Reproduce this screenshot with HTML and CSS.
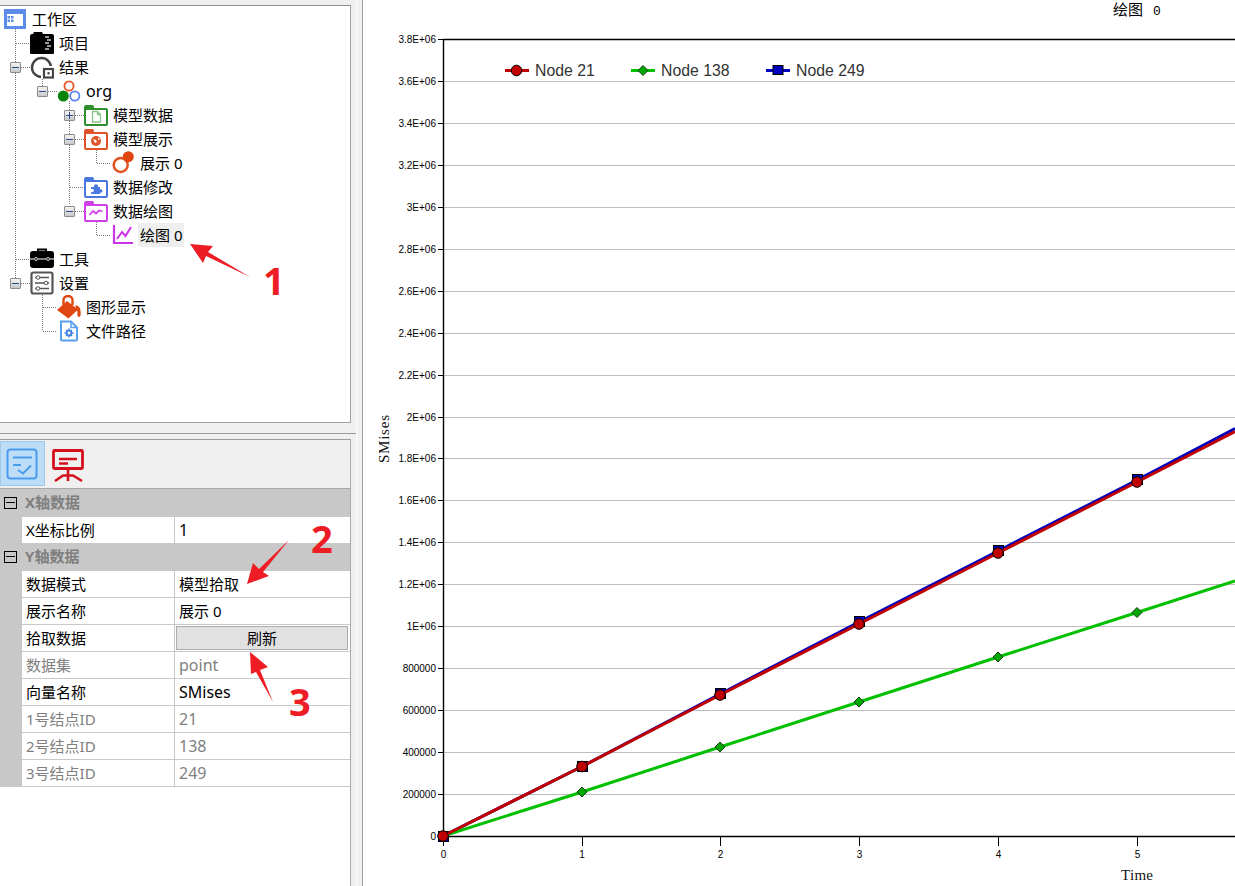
FILE: index.html
```html
<!DOCTYPE html>
<html lang="zh">
<head>
<meta charset="utf-8">
<title>绘图 0</title>
<link rel="stylesheet" href="styles.css">
</head>
<body>
<div class="shell">
  <aside class="left">
    <div class="strip"></div>
    <section class="tree">
      <svg class="connectors" viewBox="0 6 350 416" width="350" height="416">
        <path d="M15.5 29V278M16 43.5H30M16 259.5H30M21 67.5H30M21 283.5H30M42.5 77V86M48 91.5H57M42.5 295V331M43 307.5H57M43 331.5H57M69.5 101V205M75 115.5H84M75 139.5H84M70 187.5H84M75 211.5H84M96.5 150V163M97 163.5H111M96.5 222V235M97 235.5H111"/>
      </svg>
      <div class="node l0">
        <svg class="ico" viewBox="0 0 24 24"><rect x="2.500" y="3.500" width="19" height="17" fill="#fff" stroke="#5f8beb" stroke-width="3"/><rect x="1" y="2" width="22" height="5" fill="#5f8beb"/><path d="M4.500 9h2.500v2.500H4.500zM8 9h2.500v2.500H8zM4.500 12.500h2.500V15H4.500zM8 12.500h2.500V15H8z" fill="#5f8beb"/></svg>
        <span class="label">工作区</span>
      </div>
      <div class="node l1"><span class="slot"></span>
        <svg class="ico" viewBox="0 0 24 24"><path d="M0 5a2 2 0 0 1 2-2h1l1-2h8l1 2h9a2 2 0 0 1 2 2v17a1 1 0 0 1-1 1H1a1 1 0 0 1-1-1z" fill="#000"/><path d="M15 6h4M17 9h4M15 12h4M17 15h4M15 18h4" stroke="#ccc" stroke-width="1.600"/></svg>
        <span class="label">项目</span>
      </div>
      <div class="node l1"><span class="slot"><span class="exp minus"></span></span>
        <svg class="ico" viewBox="0 0 24 24"><circle cx="11.500" cy="12.500" r="9.500" fill="none" stroke="#444" stroke-width="2.400"/><rect x="11" y="11" width="13" height="13" fill="#fff"/><rect x="14" y="14" width="9" height="8.500" fill="#fff" stroke="#444" stroke-width="2.200"/><rect x="17.500" y="17" width="2" height="2.500" fill="#444"/></svg>
        <span class="label">结果</span>
      </div>
      <div class="node l2"><span class="slot"><span class="exp minus"></span></span>
        <svg class="ico" viewBox="0 0 24 24"><circle cx="12" cy="7" r="4.600" fill="#fff" stroke="#e8572a" stroke-width="1.800"/><circle cx="17.800" cy="17" r="4.600" fill="#fff" stroke="#5a85ee" stroke-width="1.800"/><circle cx="6.300" cy="17" r="5.500" fill="#0a840a"/></svg>
        <span class="label lat">org</span>
      </div>
      <div class="node l3"><span class="slot"><span class="exp plus"></span></span>
        <svg class="ico" viewBox="0 0 24 24"><path d="M0 6V4a2 2 0 0 1 2-2h6a2 2 0 0 1 2 2v1h12a2 2 0 0 1 2 2v14a2 2 0 0 1-2 2H2a2 2 0 0 1-2-2z" fill="#2d8f2d"/><rect x="2" y="7" width="20" height="14" fill="#fff"/><path d="M8.500 8.500h5l3 3v7.500h-8zM13.500 8.500v3h3" fill="none" stroke="#8bc48b" stroke-width="1.300"/></svg>
        <span class="label">模型数据</span>
      </div>
      <div class="node l3"><span class="slot"><span class="exp minus"></span></span>
        <svg class="ico" viewBox="0 0 24 24"><path d="M0 6V4a2 2 0 0 1 2-2h6a2 2 0 0 1 2 2v1h12a2 2 0 0 1 2 2v14a2 2 0 0 1-2 2H2a2 2 0 0 1-2-2z" fill="#e0522a"/><rect x="2" y="7" width="20" height="14" fill="#fff"/><circle cx="12" cy="14" r="5" fill="#e0522a"/><path d="M9 12l3 1 1 2-2 1zM14 10.500l2 2-2 .500z" fill="#fff"/></svg>
        <span class="label">模型展示</span>
      </div>
      <div class="node l4"><span class="slot"></span>
        <svg class="ico" viewBox="0 0 24 24"><circle cx="9.700" cy="14" r="7" fill="#fff" stroke="#e0521f" stroke-width="2.500"/><circle cx="17.300" cy="5.700" r="5.500" fill="#e0460f"/></svg>
        <span class="label">展示 0</span>
      </div>
      <div class="node l3"><span class="slot"></span>
        <svg class="ico" viewBox="0 0 24 24"><path d="M0 6V4a2 2 0 0 1 2-2h6a2 2 0 0 1 2 2v1h12a2 2 0 0 1 2 2v14a2 2 0 0 1-2 2H2a2 2 0 0 1-2-2z" fill="#4a76e0"/><rect x="2" y="7" width="20" height="14" fill="#fff"/><path d="M7 12h3.200a2 2 0 1 1 3.600 0H16v2.500a1.700 1.700 0 1 1 0 3V19H7v-2a1.800 1.800 0 1 0 0-3z" fill="#4a76e0"/></svg>
        <span class="label">数据修改</span>
      </div>
      <div class="node l3"><span class="slot"><span class="exp minus"></span></span>
        <svg class="ico" viewBox="0 0 24 24"><path d="M0 6V4a2 2 0 0 1 2-2h6a2 2 0 0 1 2 2v1h12a2 2 0 0 1 2 2v14a2 2 0 0 1-2 2H2a2 2 0 0 1-2-2z" fill="#d040e8"/><rect x="2" y="7" width="20" height="14" fill="#fff"/><path d="M5.500 16l3.500-4 3 2.500 3-3 3.500 1" fill="none" stroke="#d040e8" stroke-width="1.800"/></svg>
        <span class="label">数据绘图</span>
      </div>
      <div class="node l4"><span class="slot"></span>
        <svg class="ico" viewBox="0 0 24 24"><path d="M3 2v18h19" fill="none" stroke="#cc33e6" stroke-width="2.200"/><path d="M6 16l5-7 3.500 4L20 4" fill="none" stroke="#cc33e6" stroke-width="2"/></svg>
        <span class="label selected">绘图 0</span>
      </div>
      <div class="node l1"><span class="slot"></span>
        <svg class="ico" viewBox="0 0 24 24"><path d="M8 6V2.500h8V6" fill="none" stroke="#000" stroke-width="2"/><rect y="4" width="24" height="17" rx="3" fill="#000"/><path d="M0 12h24" stroke="#fff" stroke-width="1"/><path d="M5 10.500h2v3H5zM17 10.500h2v3h-2z" fill="#000" stroke="#fff" stroke-width=".6"/></svg>
        <span class="label">工具</span>
      </div>
      <div class="node l1"><span class="slot"><span class="exp minus"></span></span>
        <svg class="ico" viewBox="0 0 24 24"><rect x="1.500" y="1.500" width="21" height="21" rx="2" fill="#fff" stroke="#555" stroke-width="2.200"/><path d="M5 6.500h14M5 12h14M5 17.500h14" stroke="#555" stroke-width="1.300"/><circle cx="8" cy="6.500" r="1.800" fill="#fff" stroke="#555"/><circle cx="16" cy="12" r="1.800" fill="#fff" stroke="#555"/><circle cx="8" cy="17.500" r="1.800" fill="#fff" stroke="#555"/></svg>
        <span class="label">设置</span>
      </div>
      <div class="node l2"><span class="slot"></span>
        <svg class="ico" viewBox="0 0 24 24"><path d="M6.500 10V5a4.500 4 0 0 1 9 0v5" fill="none" stroke="#e0460f" stroke-width="2.400"/><path d="M0 15L10 6l11 8.500-9.500 9z" fill="#e0460f"/><path d="M18 10.500c3.500 0 5.500 2 5.500 5.500 .300 3 .300 6-1.500 6s-1.800-3-1.500-5z" fill="#e0460f"/></svg>
        <span class="label">图形显示</span>
      </div>
      <div class="node l2"><span class="slot"></span>
        <svg class="ico" viewBox="0 0 24 24"><path d="M4 2.500h10l6 6v12a1 1 0 0 1-1 1H5a1 1 0 0 1-1-1z" fill="#fff" stroke="#5aa0f0" stroke-width="2"/><path d="M14 3v5.500h5.500" fill="none" stroke="#5aa0f0" stroke-width="1.500"/><circle cx="12" cy="14" r="3.400" fill="#4a86e0"/><path d="M12 9.500v9M7.500 14h9M9 11l6 6M15 11l-6 6" stroke="#4a86e0" stroke-width="1.500"/><circle cx="12" cy="14" r="1.400" fill="#fff"/></svg>
        <span class="label">文件路径</span>
      </div>
    </section>
    <div class="split-gap"></div>
    <div class="split-gap-short"></div>
    <section class="props">
      <div class="toolbar">
        <button class="tool active" type="button" aria-label="属性">
          <svg viewBox="0 0 45 45" width="45" height="45"><rect x="7.500" y="8.500" width="29" height="29" rx="3" fill="none" stroke="#4a9cf0" stroke-width="2"/><path d="M13 16.500h19M13 24h8" stroke="#4a9cf0" stroke-width="2"/><path d="M18 29l5 3.500 8-8" fill="none" stroke="#4a9cf0" stroke-width="2"/></svg>
        </button>
        <button class="tool" type="button" aria-label="展示">
          <svg viewBox="0 0 45 45" width="45" height="45"><rect x="8.500" y="9.500" width="29" height="18" rx="1" fill="none" stroke="#d40f1e" stroke-width="2.800"/><path d="M14 18h18M14 22.500h9M23 27v13M10 40l8-5.500h10l9 5.500" fill="none" stroke="#d40f1e" stroke-width="2.600"/></svg>
        </button>
      </div>
      <div class="grid">
        <div class="group"><span class="box"></span><span class="group-title">X轴数据</span></div>
        <div class="prow last"><span class="gutter"></span><span class="name">X坐标比例</span><span class="value lat">1</span></div>
        <div class="group"><span class="box"></span><span class="group-title">Y轴数据</span></div>
        <div class="prow"><span class="gutter"></span><span class="name">数据模式</span><span class="value">模型拾取</span></div>
        <div class="prow"><span class="gutter"></span><span class="name">展示名称</span><span class="value">展示 0</span></div>
        <div class="prow"><span class="gutter"></span><span class="name">拾取数据</span><span class="value btn-cell"><button class="refresh" type="button">刷新</button></span></div>
        <div class="prow muted"><span class="gutter"></span><span class="name">数据集</span><span class="value lat">point</span></div>
        <div class="prow"><span class="gutter"></span><span class="name">向量名称</span><span class="value lat">SMises</span></div>
        <div class="prow muted"><span class="gutter"></span><span class="name">1号结点ID</span><span class="value lat">21</span></div>
        <div class="prow muted"><span class="gutter"></span><span class="name">2号结点ID</span><span class="value lat">138</span></div>
        <div class="prow muted"><span class="gutter"></span><span class="name">3号结点ID</span><span class="value lat">249</span></div>
      </div>
    </section>
  </aside>
  <div class="splitter"></div>
  <main class="chart">
    <svg viewBox="363 0 872 886" width="872" height="886">
      <text class="title" x="1113" y="15">绘图<tspan class="title-num" x="1153">0</tspan></text>
      <path class="gridline" d="M443 81.500H1235M443 123.500H1235M443 165.500H1235M443 207.500H1235M443 249.500H1235M443 291.500H1235M443 333.500H1235M443 375.500H1235M443 417.500H1235M443 458.500H1235M443 500.500H1235M443 542.500H1235M443 584.500H1235M443 626.500H1235M443 668.500H1235M443 710.500H1235M443 752.500H1235M443 794.500H1235"/>
      <path class="axis" d="M443.500 39V836.500M443 39.500H1235M443 836.500H1235"/>
      <path class="tick" d="M438 39.500H443M438 81.500H443M438 123.500H443M438 165.500H443M438 207.500H443M438 249.500H443M438 291.500H443M438 333.500H443M438 375.500H443M438 417.500H443M438 458.500H443M438 500.500H443M438 542.500H443M438 584.500H443M438 626.500H443M438 668.500H443M438 710.500H443M438 752.500H443M438 794.500H443M438 836.500H443M443.500 837V846M582.500 837V846M720.500 837V846M859.500 837V846M998.500 837V846M1137.500 837V846"/>
      <g class="ylab">
        <text x="436" y="43">3.8E+06</text><text x="436" y="85">3.6E+06</text><text x="436" y="127">3.4E+06</text><text x="436" y="169">3.2E+06</text><text x="436" y="211">3E+06</text><text x="436" y="253">2.8E+06</text><text x="436" y="295">2.6E+06</text><text x="436" y="337">2.4E+06</text><text x="436" y="379">2.2E+06</text><text x="436" y="421">2E+06</text><text x="436" y="462">1.8E+06</text><text x="436" y="504">1.6E+06</text><text x="436" y="546">1.4E+06</text><text x="436" y="588">1.2E+06</text><text x="436" y="630">1E+06</text><text x="436" y="672">800000</text><text x="436" y="714">600000</text><text x="436" y="756">400000</text><text x="436" y="798">200000</text><text x="436" y="840">0</text>
      </g>
      <g class="xlab">
        <text x="443.500" y="858">0</text><text x="582" y="858">1</text><text x="720.500" y="858">2</text><text x="859.500" y="858">3</text><text x="998.500" y="858">4</text><text x="1137.500" y="858">5</text>
      </g>
      <text class="axis-title" x="1121" y="880" textLength="32" lengthAdjust="spacing">Time</text>
      <text class="axis-title" transform="translate(389 463) rotate(-90)" textLength="48" lengthAdjust="spacing">SMises</text>

      <polyline class="s-blue" points="443,836 582,766.500 720,694 859,622 998,551 1137,480 1235,428.500"/>
      <g class="m-blue">
        <rect x="438.500" y="831.500" width="10" height="10"/><rect x="577.500" y="761.500" width="10" height="10"/><rect x="715.500" y="688.500" width="10" height="10"/><rect x="854.500" y="616.500" width="10" height="10"/><rect x="993.500" y="545.500" width="10" height="10"/><rect x="1132.500" y="474.500" width="10" height="10"/>
      </g>
      <polyline class="s-green" points="443,836 582,792 720,747 859,702 998,657 1137,612.500 1235,581"/>
      <g class="m-green">
        <path d="M582 787l5 5-5 5-5-5z"/><path d="M720 742l5 5-5 5-5-5z"/><path d="M859 697l5 5-5 5-5-5z"/><path d="M998 652l5 5-5 5-5-5z"/><path d="M1137 607.500l5 5-5 5-5-5z"/>
      </g>
      <polyline class="s-red" points="443,836 582,766.500 720,695 859,624 998,553 1137,482 1235,431.500"/>
      <g class="m-red">
        <circle cx="443" cy="836" r="5.300"/><circle cx="582" cy="766.500" r="5.300"/><circle cx="720" cy="695" r="5.300"/><circle cx="859" cy="624" r="5.300"/><circle cx="998" cy="553" r="5.300"/><circle cx="1137" cy="482" r="5.300"/>
      </g>

      <g class="legend">
        <path class="s-red" d="M505 70.500H529"/><circle class="m-red-l" cx="516.500" cy="70.500" r="5.300"/><text x="535" y="76">Node 21</text>
        <path class="s-green" d="M631 70.500H655"/><path class="m-green-l" d="M643 65.500l5 5-5 5-5-5z"/><text x="661" y="76">Node 138</text>
        <path class="s-blue" d="M766 70.500H790"/><rect class="m-blue-l" x="773" y="65.500" width="10" height="9"/><text x="796" y="76">Node 249</text>
      </g>
    </svg>
  </main>
  <svg class="annotations" viewBox="0 0 1235 886" width="1235" height="886">
    <polygon points="190,244 213,246 208,252 250,277 206,256 203,263"/>
    <polygon points="247,584 253,563 259,569 289,540 263,572 269,576"/>
    <polygon points="250,652 268,667 260,670 273,702 256,672 251,674"/>
    <text x="263" y="295">1</text>
    <text x="311" y="553">2</text>
    <text x="289" y="716">3</text>
  </svg>
</div>
</body>
</html>
```

FILE: styles.css
```css
* { box-sizing: border-box; }
html, body { margin: 0; padding: 0; height: 100%; }
body {
  background: #fff;
  font-family: "Noto Sans", "Noto Sans CJK SC", sans-serif;
  font-size: 15px;
  color: #000;
  overflow: hidden;
}
.shell {
  position: relative;
  display: flex;
  width: 1235px;
  height: 886px;
}
.left {
  display: flex;
  flex-direction: column;
  width: 356px;
  height: 886px;
  background: #f0f0f0;
}
.strip { height: 5px; width: 351px; flex: none; }
.tree {
  position: relative;
  flex: none;
  width: 351px;
  height: 418px;
  padding-top: 1px;
  background: #fff;
  border-top: 1px solid #8f8f8f;
  border-right: 1px solid #a0a0a0;
  border-bottom: 1px solid #a0a0a0;
}
.connectors {
  position: absolute;
  left: 0;
  top: 0;
  fill: none;
  stroke: #777;
  stroke-width: 1;
  stroke-dasharray: 1 1;
}
.node {
  position: relative;
  display: flex;
  align-items: center;
  height: 24px;
}
.l0 { padding-left: 3px; }
.l1 { padding-left: 10px; }
.l2 { padding-left: 37px; }
.l3 { padding-left: 64px; }
.l4 { padding-left: 91px; }
.slot {
  display: flex;
  align-items: center;
  width: 20px;
  height: 24px;
  flex: none;
}
.ico { width: 24px; height: 24px; flex: none; }
.label {
  margin-left: 3px;
  padding: 0 2px;
  height: 24px;
  line-height: 24px;
  white-space: nowrap;
}
.lat { font-size: 16px; }
.selected { background: #eeeeee; }
.exp {
  position: relative;
  display: block;
  width: 11px;
  height: 11px;
  border: 1px solid #8c8c8c;
  border-radius: 1px;
  background: linear-gradient(#f4f4f4, #c8c8c8);
}
.exp::before {
  content: "";
  position: absolute;
  left: 1px;
  top: 4px;
  width: 7px;
  height: 1px;
  background: #2a4a8c;
}
.plus::after {
  content: "";
  position: absolute;
  left: 4px;
  top: 1px;
  width: 1px;
  height: 7px;
  background: #2a4a8c;
}
.split-gap {
  flex: none;
  height: 11px;
  border-bottom: 1px solid #9a9a9a;
}
.split-gap-short {
  flex: none;
  width: 351px;
  height: 6px;
  border-bottom: 1px solid #9a9a9a;
}
.props {
  flex: 1;
  display: flex;
  flex-direction: column;
  width: 351px;
  border-right: 1px solid #a8a8a8;
}
.toolbar {
  display: flex;
  height: 48px;
  padding-top: 1px;
}
.tool {
  width: 45px;
  height: 45px;
  padding: 0;
  border: 0;
  background: none;
  display: block;
}
.tool.active {
  background: #bddcf5;
  outline: 1px solid #9cc8ec;
  outline-offset: -1px;
}
.grid {
  flex: 1;
  background: #fff;
  border-top: 1px solid #a8a8a8;
}
.group {
  display: flex;
  align-items: center;
  height: 28px;
  padding-left: 4px;
  gap: 8px;
  background: #c8c8c8;
  color: #7f7f7f;
  font-weight: 700;
  line-height: 20px;
}
.group-title { margin-top: -2px; }
.box {
  position: relative;
  width: 13px;
  height: 12px;
  border: 1px solid #000;
}
.box::before {
  content: "";
  position: absolute;
  left: 1px;
  right: 1px;
  top: 4px;
  height: 1px;
  background: #000;
}
.prow {
  display: grid;
  grid-template-columns: 22px 153px 1fr;
  height: 27px;
  line-height: 26px;
}
.prow.last { height: 26px; }
.gutter { background: #c8c8c8; }
.name, .value {
  padding-left: 4px;
  border-bottom: 1px solid #c8c8c8;
  white-space: nowrap;
}
.name { border-right: 1px solid #c8c8c8; }
.last .name, .last .value { border-bottom: 0; }
.muted { color: #808080; }
.btn-cell { padding: 1px 2px 1px 1px; }
.refresh {
  display: block;
  width: 100%;
  height: 24px;
  padding: 0;
  background: #e1e1e1;
  border: 1px solid #adadad;
  outline: 1px solid #adadad;
  outline-offset: -1px;
  color: #000;
  font: inherit;
  line-height: 20px;
}
.splitter {
  width: 7px;
  height: 886px;
  background: linear-gradient(90deg, #f8f8f8 0 2px, #f0f0f0 2px 6px, #a0a0a0 6px 7px);
}
.chart { flex: 1; height: 886px; background: #fff; }
.chart svg { display: block; }
.title { font-family: "Liberation Mono", "Noto Sans CJK SC", monospace; font-size: 15px; }
.title-num { font-size: 13px; }
.gridline { stroke: #bdbdbd; stroke-width: 1; fill: none; }
.axis { stroke: #000; stroke-width: 1.400; fill: none; }
.tick { stroke: #000; stroke-width: 1; fill: none; }
.ylab text, .xlab text {
  font-family: "Liberation Sans", sans-serif;
  font-size: 10px;
  fill: #000;
}
.ylab text { text-anchor: end; }
.xlab text { text-anchor: middle; }
.axis-title {
  font-family: "Liberation Serif", serif;
  font-size: 15px;
  fill: #111;
}
.s-red, .s-green, .s-blue { fill: none; stroke-width: 3; }
.s-red { stroke: #c00000; }
.s-green { stroke: #00c000; }
.s-blue { stroke: #0000c0; }
.m-red circle, .m-red-l { fill: #c00000; stroke: #000; stroke-width: 1; }
.m-green path, .m-green-l { fill: #00a800; stroke: #1a3a1a; stroke-width: 1; }
.m-blue rect, .m-blue-l { fill: #0000c0; stroke: #000; stroke-width: 1; }
.legend text {
  font-family: "Liberation Sans", sans-serif;
  font-size: 15.800px;
  fill: #333;
}
.annotations {
  position: absolute;
  left: 0;
  top: 0;
  pointer-events: none;
}
.annotations polygon { fill: #ee1c25; }
.annotations text {
  font-family: "Open Sans", sans-serif;
  font-weight: 700;
  font-size: 38px;
  fill: #ee1c25;
}
```
